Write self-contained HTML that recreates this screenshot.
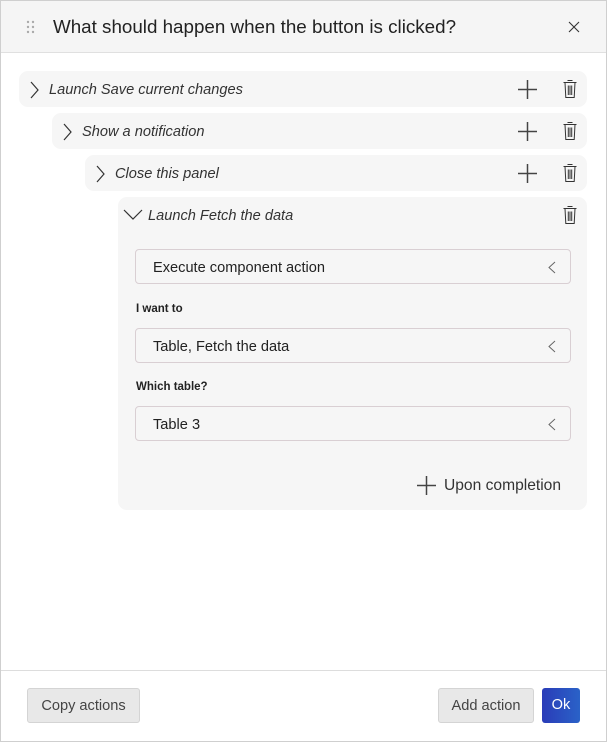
<!DOCTYPE html>
<html><head><style>
*{box-sizing:border-box;margin:0;padding:0}
body{width:607px;height:742px;background:#fff;font-family:"Liberation Sans",sans-serif;color:#222;position:relative;overflow:hidden}
.frame{position:absolute;inset:0;border:1px solid #cfcfcf}
.hdr{position:absolute;left:1px;top:1px;right:1px;height:52px;background:#f5f5f5;border-bottom:1px solid #e0e0e0}
.title{position:absolute;left:52px;top:15px;font-size:18.8px;color:#222}
.row{position:absolute;background:#f6f6f6;border-radius:9px;right:20px;height:36px}
.lbl{position:absolute;left:30px;top:11px;font-style:italic;font-size:14.6px;color:#333}
.chev{position:absolute;left:10px;top:10px}
.plus{position:absolute;right:50px;top:9px}
.trash{position:absolute;right:9px;top:8px}
.dd{position:absolute;left:135px;width:436px;height:35px;border:1px solid #d9cfd3;border-radius:4px;background:#f6f6f6;font-size:14.6px;padding:10px 0 0 17px;color:#222}
.dd svg{position:absolute;right:14px;top:11px}
.fl{position:absolute;left:136px;font-size:11.5px;font-weight:bold;color:#222}
.btn{position:absolute;top:688px;height:35px;border:1px solid #d4d4d4;border-radius:3px;background:#e8e8e8;font-size:14.6px;color:#444;text-align:center;line-height:35px}
</style></head><body>
<div class="frame"></div>
<div class="hdr">
<svg style="position:absolute;left:25px;top:19px" width="10" height="14"><g fill="#aaa"><circle cx="2" cy="2" r="1.2"/><circle cx="7" cy="2" r="1.2"/><circle cx="2" cy="7" r="1.2"/><circle cx="7" cy="7" r="1.2"/><circle cx="2" cy="12" r="1.2"/><circle cx="7" cy="12" r="1.2"/></g></svg>
<div class="title">What should happen when the button is clicked?</div>
<svg style="position:absolute;left:567px;top:20px" width="12" height="12"><path d="M1 1L11 11M11 1L1 11" stroke="#333" stroke-width="1.1"/></svg>
</div>

<div class="row" style="left:19px;top:71px"><svg class="chev" width="10" height="18"><path d="M2 1L9 9L2 17" fill="none" stroke="#333" stroke-width="1.2"/></svg><div class="lbl">Launch Save current changes</div>
<svg class="plus" width="19" height="19"><path d="M9.5 0V19M0 9.5H19" stroke="#444" stroke-width="1.5"/></svg>
<svg class="trash" width="16" height="20"><path d="M5.5 1.5h5M1.5 3.5h13M3 3.5l.8 15h8.4l.8-15M6.3 6.5v9.5M8 6.5v9.5M9.7 6.5v9.5" fill="none" stroke="#333" stroke-width="1"/></svg></div>

<div class="row" style="left:52px;top:113px"><svg class="chev" width="10" height="18"><path d="M2 1L9 9L2 17" fill="none" stroke="#333" stroke-width="1.2"/></svg><div class="lbl">Show a notification</div>
<svg class="plus" width="19" height="19"><path d="M9.5 0V19M0 9.5H19" stroke="#444" stroke-width="1.5"/></svg>
<svg class="trash" width="16" height="20"><path d="M5.5 1.5h5M1.5 3.5h13M3 3.5l.8 15h8.4l.8-15M6.3 6.5v9.5M8 6.5v9.5M9.7 6.5v9.5" fill="none" stroke="#333" stroke-width="1"/></svg></div>

<div class="row" style="left:85px;top:155px"><svg class="chev" width="10" height="18"><path d="M2 1L9 9L2 17" fill="none" stroke="#333" stroke-width="1.2"/></svg><div class="lbl">Close this panel</div>
<svg class="plus" width="19" height="19"><path d="M9.5 0V19M0 9.5H19" stroke="#444" stroke-width="1.5"/></svg>
<svg class="trash" width="16" height="20"><path d="M5.5 1.5h5M1.5 3.5h13M3 3.5l.8 15h8.4l.8-15M6.3 6.5v9.5M8 6.5v9.5M9.7 6.5v9.5" fill="none" stroke="#333" stroke-width="1"/></svg></div>

<div class="row" style="left:118px;top:197px;height:313px"><svg class="chev" style="left:5px;top:12px" width="20" height="11"><path d="M1 1L10 10L19 1" fill="none" stroke="#333" stroke-width="1.2"/></svg><div class="lbl">Launch Fetch the data</div>
<svg class="trash" width="16" height="20"><path d="M5.5 1.5h5M1.5 3.5h13M3 3.5l.8 15h8.4l.8-15M6.3 6.5v9.5M8 6.5v9.5M9.7 6.5v9.5" fill="none" stroke="#333" stroke-width="1"/></svg></div>

<div class="dd" style="top:249px">Execute component action<svg width="8" height="13"><path d="M7 1L1 6.5L7 12" fill="none" stroke="#666" stroke-width="1"/></svg></div>
<div class="fl" style="top:303px">I want to</div>
<div class="dd" style="top:328px">Table, Fetch the data<svg width="8" height="13"><path d="M7 1L1 6.5L7 12" fill="none" stroke="#666" stroke-width="1"/></svg></div>
<div class="fl" style="top:381px">Which table?</div>
<div class="dd" style="top:406px">Table 3<svg width="8" height="13"><path d="M7 1L1 6.5L7 12" fill="none" stroke="#666" stroke-width="1"/></svg></div>

<svg style="position:absolute;left:417px;top:476px" width="19" height="19"><path d="M9.5 0V19M0 9.5H19" stroke="#444" stroke-width="1.5"/></svg>
<div style="position:absolute;left:444px;top:477px;font-size:15.6px;color:#333">Upon completion</div>

<div style="position:absolute;left:1px;right:1px;top:670px;border-top:1px solid #ddd"></div>
<div class="btn" style="left:27px;width:113px">Copy actions</div>
<div class="btn" style="left:438px;width:96px">Add action</div>
<div class="btn" style="left:542px;width:38px;border:none;background:linear-gradient(90deg,#2a3cb8,#2a62c8);color:#fff">Ok</div>
</body></html>
